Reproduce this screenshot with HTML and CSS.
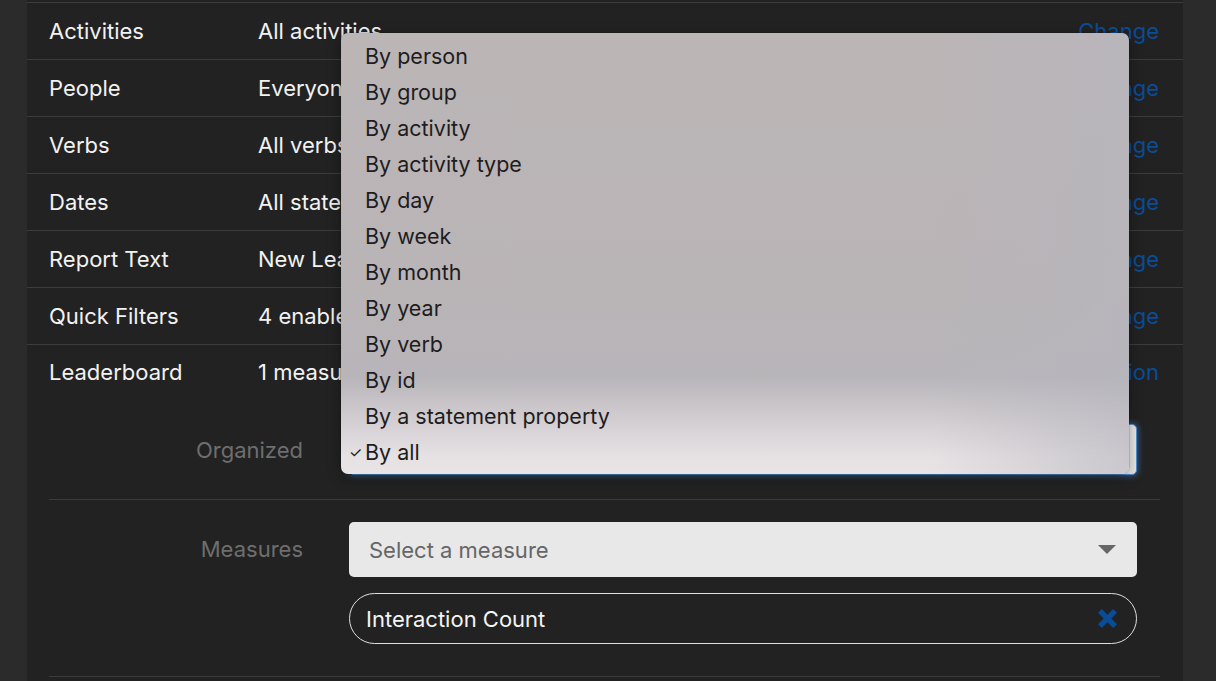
FILE: index.html
```html
<!DOCTYPE html>
<html>
<head>
<meta charset="utf-8">
<link rel="stylesheet" href="styles.css">
</head>
<body>
<div class="page">
  <div class="panel">
    <div class="rows">
      <div class="row"><span class="label">Activities</span><span class="value">All activities</span><a class="link">Change</a></div>
      <div class="row"><span class="label">People</span><span class="value">Everyone</span><a class="link">Change</a></div>
      <div class="row"><span class="label">Verbs</span><span class="value">All verbs</span><a class="link">Change</a></div>
      <div class="row"><span class="label">Dates</span><span class="value">All statements</span><a class="link">Change</a></div>
      <div class="row"><span class="label">Report Text</span><span class="value">New Leaderboard</span><a class="link">Change</a></div>
      <div class="row"><span class="label">Quick Filters</span><span class="value">4 enabled</span><a class="link">Change</a></div>
      <div class="row row-last"><span class="label">Leaderboard</span><span class="value">1 measure</span><a class="link">Hide section</a></div>
    </div>
    <div class="subform">
      <div class="frow frow-org">
        <span class="flabel">Organized</span>
        <div class="select select-focus"><span class="sel-text">By all</span><span class="caret small"></span></div>
      </div>
      <div class="frow frow-meas">
        <span class="flabel">Measures</span>
        <div class="controls">
          <div class="select"><span class="placeholder">Select a measure</span><span class="caret"></span></div>
          <div class="chip"><span>Interaction Count</span>
            <svg class="x" viewBox="0 0 20 20" width="19" height="19"><path d="M0 4 L4 0 L10 6 L16 0 L20 4 L14 10 L20 16 L16 20 L10 14 L4 20 L0 16 L6 10 Z" fill="#0b4c94"/></svg>
          </div>
        </div>
      </div>
    </div>
  </div>
  <div class="menu">
    <div class="item">By person</div>
    <div class="item">By group</div>
    <div class="item">By activity</div>
    <div class="item">By activity type</div>
    <div class="item">By day</div>
    <div class="item">By week</div>
    <div class="item">By month</div>
    <div class="item">By year</div>
    <div class="item">By verb</div>
    <div class="item">By id</div>
    <div class="item">By a statement property</div>
    <div class="item checked"><span class="check">✓</span>By all</div>
  </div>
</div>
</body>
</html>
```

FILE: styles.css
```css
html, body {
  margin: 0;
  padding: 0;
  background: #2b2b2b;
  height: 681px;
  overflow: hidden;
}
.page {
  position: relative;
  padding-left: 27px;
  font-family: Inter, Roboto, "Liberation Sans", sans-serif;
}
.panel {
  width: 1156px;
  background: #222222;
  padding-top: 2px;
  min-height: 681px;
}
.row {
  display: grid;
  grid-template-columns: 209px 1fr auto;
  align-items: center;
  height: 56px;
  padding: 0 24px 0 22px;
  border-top: 1px solid #3c3c3c;
  color: #f2f2f2;
  font-size: 22px;
}
.row-last {
  height: 54px;
}
.link {
  color: #0b4c98;
}
.subform {
  margin: 0 23px 0 22px;
}
.frow {
  display: grid;
  grid-template-columns: 254px 788px;
  column-gap: 46px;
  align-items: start;
}
.frow-org {
  padding: 25px 0 24px;
  border-bottom: 1px solid #3c3c3c;
  align-items: center;
}
.frow-meas {
  padding: 22px 0 32px;
  border-bottom: 1px solid #3c3c3c;
}
.flabel {
  text-align: right;
  color: #6e6e6e;
  font-size: 22px;
}
.frow-meas .flabel {
  line-height: 55px;
}
.select {
  height: 55px;
  box-sizing: border-box;
  background: #e8e8e8;
  border-radius: 5px;
  display: flex;
  align-items: center;
  justify-content: space-between;
  padding: 0 21px 0 20px;
  font-size: 22px;
}
.select-focus {
  height: 51px;
  border: 1px solid #4b8fd6;
  box-shadow: 0 0 6px 1px rgba(80, 150, 225, 0.55);
}
.sel-text {
  color: #222;
}
.placeholder {
  color: #666;
}
.caret {
  width: 0;
  height: 0;
  border-left: 9px solid transparent;
  border-right: 9px solid transparent;
  border-top: 9px solid #666;
}
.caret.small {
  border-left-width: 3px;
  border-right-width: 3px;
  border-top-width: 3px;
}
.controls {
  display: flex;
  flex-direction: column;
  gap: 16px;
}
.chip {
  height: 51px;
  box-sizing: border-box;
  border: 1px solid #e0e0e0;
  border-radius: 26px;
  display: flex;
  align-items: center;
  justify-content: space-between;
  padding: 0 19px 0 16px;
  color: #f4f4f4;
  font-size: 22px;
}
.x {
  display: block;
}
.menu {
  position: absolute;
  left: 341px;
  top: 33px;
  width: 788px;
  padding: 5px 0 4px;
  border-radius: 7px;
  background:
    linear-gradient(90deg, rgba(180,178,188,0) 75%, rgba(182,181,190,0.6) 100%),
    linear-gradient(180deg, #bbb5b6 0%, #b9b4b6 60%, #b8b5ba 78%, #d8d3d6 90%, #e6e1e3 96%, #e8e3e5 100%);
  box-shadow: 0 0 0 0.5px rgba(0,0,0,0.2), 0 4px 14px rgba(0,0,0,0.35);
  font-family: Inter, "Noto Sans", sans-serif;
  font-size: 21.5px;
  color: #1e1c1d;
}
.item {
  position: relative;
  height: 36px;
  line-height: 36px;
  padding-left: 24px;
}
.check {
  position: absolute;
  left: 8px;
  top: 1px;
  font-size: 15px;
}
```
